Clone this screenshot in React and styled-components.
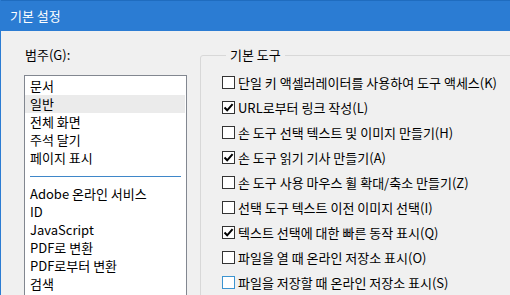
import React from "react"
import styled, { createGlobalStyle } from "styled-components"

const GlobalStyle = createGlobalStyle`
    html, body {
        margin: 0;
        padding: 0;
        background: #f0f0f0;
    }
    body {
        font-family: "Noto Sans CJK KR", "Noto Sans", sans-serif;
        font-size: 13px;
        color: #000;
    }
`

const categories = [
    { label: "문서" },
    { label: "일반", selected: true },
    { label: "전체 화면" },
    { label: "주석 달기" },
    { label: "페이지 표시" },
    { separator: true },
    { label: "Adobe 온라인 서비스" },
    { label: "ID" },
    { label: "JavaScript" },
    { label: "PDF로 변환" },
    { label: "PDF로부터 변환" },
    { label: "검색" },
]

const options = [
    { label: "단일 키 액셀러레이터를 사용하여 도구 액세스(K)" },
    { label: "URL로부터 링크 작성(L)", checked: true },
    { label: "손 도구 선택 텍스트 및 이미지 만들기(H)" },
    { label: "손 도구 읽기 기사 만들기(A)", checked: true },
    { label: "손 도구 사용 마우스 휠 확대/축소 만들기(Z)" },
    { label: "선택 도구 텍스트 이전 이미지 선택(I)" },
    { label: "텍스트 선택에 대한 빠른 동작 표시(Q)", checked: true },
    { label: "파일을 열 때 온라인 저장소 표시(O)" },
    { label: "파일을 저장할 때 온라인 저장소 표시(S)", hover: true },
]

export default function App() {
    return (
        <>
            <GlobalStyle />
            <Window>
                <TitleBar>기본 설정</TitleBar>
                <Body>
                    <Sidebar>
                        <Label>범주(G):</Label>
                        <ListBox>
                            {categories.map((item, i) =>
                                item.separator ? (
                                    <Separator key={i} />
                                ) : (
                                    <ListItem key={i} $selected={item.selected}>
                                        {item.label}
                                    </ListItem>
                                )
                            )}
                        </ListBox>
                    </Sidebar>
                    <Main>
                        <Group>
                            <Legend>기본 도구</Legend>
                            {options.map((opt, i) => (
                                <CheckRow key={i}>
                                    <Box $hover={opt.hover}>
                                        {opt.checked && <Tick />}
                                    </Box>
                                    <span>{opt.label}</span>
                                </CheckRow>
                            ))}
                        </Group>
                    </Main>
                </Body>
            </Window>
        </>
    )
}

const Tick = () => (
    <svg width="11" height="11" viewBox="0 0 11 11">
        <path
            d="M1.5 5.5 L4.2 8.3 L9.6 2.2"
            fill="none"
            stroke="#000"
            strokeWidth="2"
        />
    </svg>
)

const Window = styled.div`
    width: 510px;
    height: 295px;
    box-sizing: border-box;
    border-left: 1px solid #2b7cd3;
    display: flex;
    flex-direction: column;
    overflow: hidden;
    background: #f0f0f0;
`

const TitleBar = styled.div`
    height: 31px;
    flex: none;
    box-sizing: border-box;
    background: #2b7cd3;
    border-top: 1px solid #1f6cbf;
    color: #fff;
    display: flex;
    align-items: center;
    padding-left: 9px;
    padding-bottom: 1px;
`

const Body = styled.div`
    flex: 1;
    display: flex;
    min-height: 0;
`

const Sidebar = styled.div`
    width: 199px;
    flex: none;
    box-sizing: border-box;
    padding: 16px 0 0 23px;
    display: flex;
    flex-direction: column;
`

const Label = styled.div`
    line-height: 16px;
    padding-left: 1px;
    margin-bottom: 12px;
`

const ListBox = styled.div`
    width: 163px;
    box-sizing: border-box;
    flex: 1;
    margin-bottom: -20px;
    background: #fff;
    border: 1px solid #828790;
    padding-top: 1px;
`

const ListItem = styled.div`
    height: 18px;
    line-height: 18px;
    padding-left: 5px;
    margin: 0 1px 0 0;
    white-space: nowrap;
    background: ${({ $selected }) => ($selected ? "#ebebeb" : "transparent")};
`

const Separator = styled.div`
    height: 18px;
    display: flex;
    align-items: center;
    padding: 0 5px;

    &::after {
        content: "";
        flex: 1;
        height: 1px;
        margin-top: 1px;
        background: #3f87c9;
    }
`

const Main = styled.div`
    flex: 1;
    display: flex;
    flex-direction: column;
    padding-top: 16px;
`

const Group = styled.fieldset`
    margin: 0 -20px -40px 0;
    padding: 7px 0 0 21px;
    border: 1px solid #d8d8d8;
    border-radius: 3px;
    flex: 1;
    min-width: 0;
`

const Legend = styled.legend`
    padding: 0 4px;
    margin-left: 4px;
    line-height: 16px;
`

const CheckRow = styled.label`
    height: 25px;
    display: flex;
    align-items: center;
    gap: 3px;
    white-space: nowrap;
`

const Box = styled.span`
    width: 13px;
    height: 13px;
    box-sizing: border-box;
    flex: none;
    background: #fff;
    border: 1px solid ${({ $hover }) => ($hover ? "#3c94d0" : "#333")};
    display: flex;
    align-items: center;
    justify-content: center;
`
